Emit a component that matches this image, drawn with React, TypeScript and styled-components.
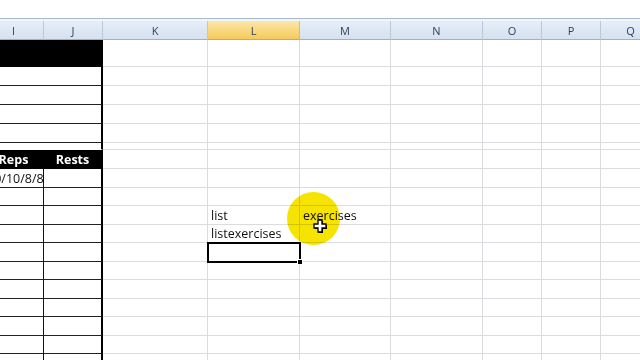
import React from 'react';
import styled, { createGlobalStyle, css } from 'styled-components';

const GlobalStyle = createGlobalStyle`
  html, body {
    margin: 0;
    padding: 0;
    background: #ffffff;
    overflow: hidden;
  }
`;

// column widths, I is partly scrolled off to the left
const COLUMNS = [
  { name: 'I', width: 60 },
  { name: 'J', width: 59 },
  { name: 'K', width: 105 },
  { name: 'L', width: 92 },
  { name: 'M', width: 91 },
  { name: 'N', width: 92 },
  { name: 'O', width: 59 },
  { name: 'P', width: 59 },
  { name: 'Q', width: 60 },
];
const TEMPLATE = COLUMNS.map((c) => `${c.width}px`).join(' ');

type Kind = 'ink' | 'merged' | 'gap' | 'titles' | 'data';

type RowDef = {
  height: number;
  kind: Kind;
  first?: string;
  right?: { [col: string]: string };
  selected?: string;
};

const ROWS: RowDef[] = [
  { height: 27, kind: 'ink' },
  { height: 19, kind: 'merged' },
  { height: 19, kind: 'merged' },
  { height: 19, kind: 'merged' },
  { height: 19, kind: 'merged' },
  { height: 7, kind: 'gap' },
  { height: 19, kind: 'titles' },
  { height: 19, kind: 'data', first: '10/10/8/8' },
  { height: 18, kind: 'data' },
  { height: 19, kind: 'data', right: { L: 'list', M: 'exercises' } },
  { height: 18, kind: 'data', right: { L: 'listexercises' } },
  { height: 19, kind: 'data', selected: 'L' },
  { height: 18, kind: 'data' },
  { height: 19, kind: 'data' },
  { height: 18, kind: 'data' },
  { height: 19, kind: 'data' },
  { height: 18, kind: 'data' },
  { height: 19, kind: 'data' },
];

const Screen = styled.div`
  position: relative;
  width: 640px;
  height: 360px;
  overflow: hidden;
  background: #ffffff;
  padding-top: 18px;
  box-sizing: border-box;
  font-family: 'Open Sans', 'Liberation Sans', sans-serif;
`;

const Sheet = styled.div`
  margin-left: -16px;
  width: 690px;
`;

const HeaderRow = styled.div`
  display: grid;
  grid-template-columns: ${TEMPLATE};
  border-top: 1px solid #a9bbcf;
  padding-top: 2px;
  background: #f1f5fa;
`;

const HeaderCell = styled.div<{ $active?: boolean }>`
  height: 19px;
  box-sizing: border-box;
  display: flex;
  align-items: center;
  justify-content: center;
  font-size: 11px;
  color: #2c4261;
  background: linear-gradient(#e6eef8, #d5e1ef);
  border-right: 1px solid #b9c9db;
  border-bottom: 1px solid #9db2ca;
  ${(p) =>
    p.$active &&
    css`
      background: linear-gradient(#fbe7a6, #f6ca5b);
      border-bottom-color: #e3a43a;
      border-right-color: #e2b86a;
    `}
`;

const Row = styled.div<{ $height: number }>`
  display: grid;
  grid-template-columns: ${TEMPLATE};
  grid-template-rows: ${(p) => p.$height}px;
  height: ${(p) => p.$height}px;
`;

type Tone = 'grid' | 'ink' | 'boxed' | 'plain';

const Cell = styled.div<{
  $tone?: Tone;
  $span?: number;
  $edge?: boolean;
  $center?: boolean;
  $selected?: boolean;
}>`
  position: relative;
  box-sizing: border-box;
  display: flex;
  align-items: flex-end;
  justify-content: ${(p) => (p.$center ? 'center' : 'flex-start')};
  padding: 0 3px 0;
  min-width: 0;
  min-height: 0;
  overflow: hidden;
  white-space: nowrap;
  font-size: 12.5px;
  line-height: 16px;
  color: #111111;
  background: #ffffff;
  border-right: 1px solid #dadcdf;
  border-bottom: 1px solid #dadcdf;
  grid-column: span ${(p) => p.$span ?? 1};

  ${(p) =>
    p.$tone === 'ink' &&
    css`
      background: #000000;
      color: #ffffff;
      font-weight: 700;
      border-right-color: #000000;
      border-bottom-color: #000000;
    `}
  ${(p) =>
    p.$tone === 'boxed' &&
    css`
      border-right-color: #111111;
      border-bottom-color: #222222;
    `}
  ${(p) =>
    p.$tone === 'plain' &&
    css`
      border-right-color: #111111;
      border-bottom-color: #ffffff;
    `}
  ${(p) =>
    p.$edge &&
    css`
      border-right: 2px solid #000000;
    `}
  ${(p) =>
    p.$selected &&
    css`
      overflow: visible;
      &::after {
        content: '';
        position: absolute;
        left: -1px;
        top: -1px;
        right: -2px;
        bottom: -2px;
        border: 2px solid #000000;
        z-index: 2;
      }
      &::before {
        content: '';
        position: absolute;
        right: -4px;
        bottom: -4px;
        width: 4px;
        height: 4px;
        background: #000000;
        border: 1px solid #ffffff;
        z-index: 3;
      }
    `}
`;

const Spot = styled.div`
  position: absolute;
  left: 287px;
  top: 192px;
  width: 53px;
  height: 53px;
  border-radius: 50%;
  background: #f6e300;
  mix-blend-mode: multiply;
  pointer-events: none;
  z-index: 4;
`;

const Pointer = styled.svg`
  position: absolute;
  left: 312px;
  top: 218px;
  z-index: 5;
`;

function LeftCells({ row }: { row: RowDef }) {
  switch (row.kind) {
    case 'ink':
      return <Cell $tone="ink" $span={2} $edge />;
    case 'merged':
      return <Cell $tone="boxed" $span={2} $edge />;
    case 'gap':
      return <Cell $tone="plain" $span={2} $edge />;
    case 'titles':
      return (
        <>
          <Cell $tone="ink" $center>
            Reps
          </Cell>
          <Cell $tone="ink" $center $edge>
            Rests
          </Cell>
        </>
      );
    default:
      return (
        <>
          <Cell $tone="boxed">{row.first}</Cell>
          <Cell $tone="boxed" $edge />
        </>
      );
  }
}

export default function App() {
  const rightCols = COLUMNS.slice(2);
  return (
    <Screen>
      <GlobalStyle />
      <Sheet>
        <HeaderRow>
          {COLUMNS.map((c) => (
            <HeaderCell key={c.name} $active={c.name === 'L'}>
              {c.name}
            </HeaderCell>
          ))}
        </HeaderRow>
        {ROWS.map((row, i) => (
          <Row key={i} $height={row.height}>
            <LeftCells row={row} />
            {rightCols.map((c) => (
              <Cell key={c.name} $selected={row.selected === c.name}>
                {row.right?.[c.name]}
              </Cell>
            ))}
          </Row>
        ))}
      </Sheet>
      <Spot />
      <Pointer width="16" height="16" viewBox="0 0 16 16">
        <polygon
          points="6,2 10,2 10,6 14,6 14,10 10,10 10,14 6,14 6,10 2,10 2,6 6,6"
          fill="#000000"
          transform="translate(1 1)"
        />
        <polygon
          points="6,2 10,2 10,6 14,6 14,10 10,10 10,14 6,14 6,10 2,10 2,6 6,6"
          fill="#ffffff"
          stroke="#000000"
          strokeWidth="1.3"
        />
      </Pointer>
    </Screen>
  );
}
